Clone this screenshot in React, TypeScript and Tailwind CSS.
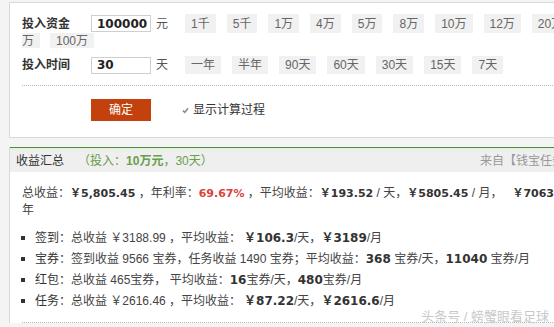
import React from 'react';

const AMOUNTS = ['1千', '5千', '1万', '4万', '5万', '8万', '10万', '12万', '20万'];
const DAYS = ['一年', '半年', '90天', '60天', '30天', '15天', '7天'];

const Chip: React.FC<{ label: string; className?: string }> = ({ label, className = '' }) => (
    <span className={`flex items-center px-[6px] bg-[#f1f1f1] text-[#666] whitespace-nowrap ${className}`}>
        {label}
    </span>
);

const Field: React.FC<{ value: string }> = ({ value }) => (
    <div className="w-[60px] h-[17px] border border-[#cfcfcf] bg-white pl-[5px] flex items-center font-[family-name:'DejaVu_Sans',sans-serif] font-bold text-[12px] text-[#222]">
        {value}
    </div>
);

// bold number inside the summary
const B: React.FC<{ children: React.ReactNode; red?: boolean; className?: string }> = ({
    children,
    red,
    className = 'text-[11px]',
}) => (
    <b
        className={`font-[family-name:'DejaVu_Sans','Noto_Sans_CJK_SC',sans-serif] font-bold ${
            red ? 'text-[#d9443a]' : 'text-[#333]'
        } ${className}`}
    >
        {children}
    </b>
);

const Item: React.FC<{ children: React.ReactNode }> = ({ children }) => (
    <li className="flex items-center h-[21px] whitespace-nowrap">
        <span className="w-[4px] h-[4px] bg-[#333] ml-[11px] mr-[10px] shrink-0" />
        <span>{children}</span>
    </li>
);

export default function App() {
    return (
        <div className="relative w-[554px] h-[327px] overflow-hidden bg-[#f4f4f4] text-[12px] text-[#444] font-[family-name:'Liberation_Sans','Noto_Sans_CJK_SC',sans-serif]">
            {/* Input card */}
            <div className="ml-[9px] mt-[2px] w-[620px] bg-white border-l border-t border-b border-[#d9d9d9] pl-[12px] pt-[11px] pb-[16px]">
                <div className="flex items-center h-[19px]">
                    <span className="w-[69px] font-bold text-[#333]">投入资金</span>
                    <Field value="100000" />
                    <span className="ml-[5px] text-[#555]">元</span>
                    <div className="ml-[17px] flex gap-[11px] h-full">
                        {AMOUNTS.map((a) => (
                            <Chip key={a} label={a} />
                        ))}
                    </div>
                </div>
                <div className="flex h-[15px] gap-[10px]">
                    <Chip label="万" className="pl-0" />
                    <Chip label="100万" />
                </div>
                <div className="mt-[8px] flex items-center h-[18px]">
                    <span className="w-[69px] font-bold text-[#333]">投入时间</span>
                    <Field value="30" />
                    <span className="ml-[5px] text-[#555]">天</span>
                    <div className="ml-[17px] flex gap-[11px] h-full">
                        {DAYS.map((d) => (
                            <Chip key={d} label={d} />
                        ))}
                    </div>
                </div>
                <div className="mt-[11px] border-t border-dotted border-[#b8b8b8]" />
                <div className="mt-[13px] flex items-center">
                    <button className="ml-[69px] w-[60px] h-[22px] bg-[#c2410c] text-white text-[12px]">确定</button>
                    <svg className="ml-[31px]" width="7" height="7" viewBox="0 0 7 7">
                        <path d="M1 3.6 L2.8 5.4 L6 1.2" stroke="#888" strokeWidth="1.5" fill="none" />
                    </svg>
                    <span className="ml-[4px] text-[#333]">显示计算过程</span>
                </div>
            </div>

            {/* Result section */}
            <div className="ml-[9px] mt-[9px] w-[620px] bg-white border-l border-[#d9d9d9]">
                <div className="border-t border-[#55864a] h-[3px] bg-[#e4f3dc]" />
                <div className="h-[22px] bg-[#efefef] flex items-center pl-[6px] pr-[53px]">
                    <span className="text-[#333]">收益汇总</span>
                    <span className="ml-[14px] text-[#6a9d4c]">
                        （投入：<b className="font-bold">10万元</b>，30天）
                    </span>
                    <span className="ml-auto text-[#999]">来自【钱宝任务】</span>
                </div>
                <div className="pl-[12px] pt-[13px] leading-[16px]">
                    <div className="whitespace-nowrap">
                        总收益：<B>￥5,805.45</B> ，年利率：<B red>69.67%</B> ，平均收益：<B>￥193.52</B> / 天，
                        <B>￥5805.45</B> / 月，<B className="text-[11px] ml-[10px]">￥70632.98</B> /
                    </div>
                    <div>年</div>
                </div>
                <ul className="mt-[9px]">
                    <Item>
                        <span className="text-[#333]">签到</span>：总收益 ￥3188.99 ，平均收益：
                        <B className="text-[12px] ml-[3px]">￥106.3</B>/天，<B className="text-[12px]">￥3189</B>/月
                    </Item>
                    <Item>
                        <span className="text-[#333]">宝券</span>：签到收益 9566 宝券，任务收益 1490 宝券；平均收益：
                        <B className="text-[12px]">368</B> 宝券/天，<B className="text-[12px]">11040</B> 宝券/月
                    </Item>
                    <Item>
                        <span className="text-[#333]">红包</span>：总收益 465宝券， 平均收益：<B className="text-[12px]">16</B>
                        宝券/天，<B className="text-[12px]">480</B>宝券/月
                    </Item>
                    <Item>
                        <span className="text-[#333]">任务</span>：总收益 ￥2616.46 ，平均收益：
                        <B className="text-[12px] ml-[3px]">￥87.22</B>/天，<B className="text-[12px]">￥2616.6</B>/月
                    </Item>
                </ul>
                <div className="mt-[11px] ml-[12px] border-t border-dotted border-[#b8b8b8]" />
            </div>

            {/* watermark */}
            <span className="absolute right-[5px] bottom-[1px] text-[13px] text-[#c9c9c9]">头条号 / 螃蟹眼看足球</span>
        </div>
    );
}
